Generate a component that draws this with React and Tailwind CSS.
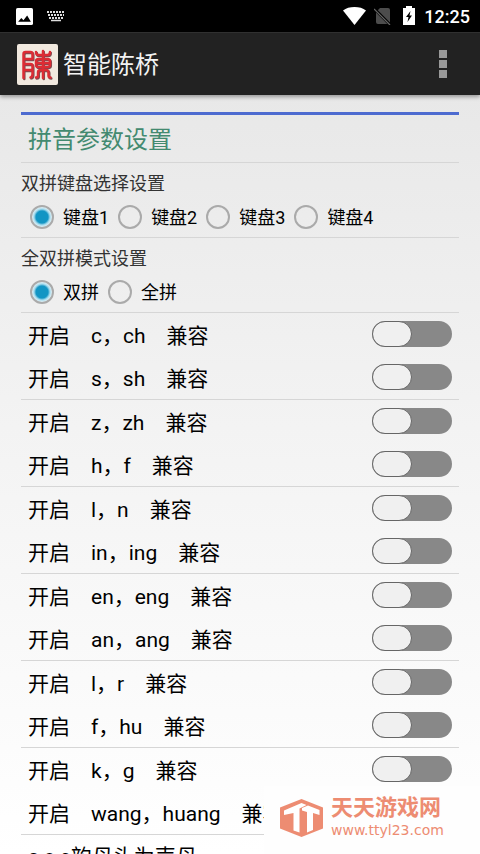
const rows = [
  ["c，ch", "s，sh"],
  ["z，zh", "h，f"],
  ["l，n", "in，ing"],
  ["en，eng", "an，ang"],
  ["l，r", "f，hu"],
  ["k，g", "wang，huang"],
];

function StatusBar() {
  return (
    <div className="flex h-8 shrink-0 items-center bg-black pr-2.5 pl-4 text-white">
      <svg className="size-[17px]" viewBox="0 0 16 16" aria-hidden="true">
        <rect width="16" height="16" rx="1.5" fill="#fff" />
        <path d="M2 13l3-3.500 2 2 3.500-4.500L14 13z" fill="#000" />
      </svg>
      <svg className="ml-3.5 h-[11px] w-[18px]" viewBox="0 0 18 11" aria-hidden="true">
        <path d="M0 1h18M1 4h16M2 7h14" stroke="#ddd" strokeWidth="2" strokeDasharray="2 1" />
        <path d="M4 9.500h10" stroke="#ddd" strokeWidth="1.500" />
      </svg>
      <div className="ml-auto flex items-center">
        <svg className="h-[18px] w-[23px]" viewBox="0 0 23 18" aria-hidden="true">
          <path d="M0 3.500C3 1 7 0 11.500 0S20 1 23 3.500L11.500 18z" fill="#fff" />
        </svg>
        <svg className="ml-2 h-[18px] w-[17px]" viewBox="0 0 17 18" aria-hidden="true">
          <path d="M6 1h8q2 0 2 2v12q0 2-2 2H4q-2 0-2-2V5z" fill="#4c4c4c" />
          <path d="M0 1.500L16 17.500" stroke="#000" strokeWidth="3" />
          <path d="M0 2L16 18" stroke="#666" strokeWidth="1.200" />
        </svg>
        <svg className="mb-0.5 ml-3 h-[19px] w-3" viewBox="0 0 12 19" aria-hidden="true">
          <path d="M3 0h6v2h3v17H0V2h3z" fill="#fff" />
          <path d="M7.500 5L3 11h2.500L4.500 16 9 9.500H6.500z" fill="#000" />
        </svg>
        <span className="ml-[9px] pt-0.5 text-lg font-medium">12:25</span>
      </div>
    </div>
  );
}

function SealStrokes() {
  return (
    <>
      <path d="M6.500 34V10q0-2 2-2h5q2 0 2 2v5h-8M6.500 20h7q2 0 2 2v4h-8M15.500 24v6q0 3-2 3.500" />
      <path d="M19 8q0 3 2.500 3h9q2.500 0 2.500-3M26 7v27M21.500 15h9q2.500 0 2.500 2.500v3q0 2.500-2.500 2.500h-9q-2.500 0-2.500-2.500v-3q0-2.500 2.500-2.500zM19 19h14" />
      <path d="M26 26h-2.500q-2.500 0-2.500 2.500v3q0 2-2 2M26 26h3q2.500 0 2.500 2.500v3q0 2 2 2" />
    </>
  );
}

function AppIcon() {
  return (
    <svg className="size-[41px]" viewBox="0 0 41 41" aria-hidden="true">
      <rect width="41" height="41" rx="2" fill="#f1e9df" />
      <g fill="none" strokeLinecap="round" strokeLinejoin="round" strokeWidth="2.500">
        <g stroke="#7d4a50" transform="translate(.8 .9)">
          <SealStrokes />
        </g>
        <g stroke="#dc2c34">
          <SealStrokes />
        </g>
      </g>
    </svg>
  );
}

function AppBar() {
  return (
    <header className="relative flex h-[63px] shrink-0 items-center border-t border-[#303030] bg-[#222] px-[17px] shadow-[0_2px_4px_rgba(0,0,0,0.35)]">
      <AppIcon />
      <h1 className="ml-[5px] pt-0.5 text-2xl text-[#f3f3f3]">智能陈桥</h1>
      <button type="button" aria-label="更多" className="ml-auto flex w-10 flex-col items-center gap-0.5 py-2">
        <span className="size-2 bg-[#999]" />
        <span className="size-2 bg-[#999]" />
        <span className="size-2 bg-[#999]" />
      </button>
    </header>
  );
}

function RadioSetting({ legend, name, options }) {
  return (
    <fieldset className="h-[75px] border-b border-[#d6d6d6] pt-[9px]">
      <legend className="float-left w-full text-lg leading-6 text-[#333]">{legend}</legend>
      <div className="clear-both flex gap-[9px] pt-2 pl-[9px]">
        {options.map((option, i) => (
          <label key={option} className="flex items-center gap-[9px] text-lg leading-6 text-black">
            <input
              type="radio"
              name={name}
              defaultChecked={i === 0}
              className="size-6 appearance-none rounded-full border-2 border-[#aaa] checked:bg-[radial-gradient(circle,#1295c4_0_6px,#a9dcee_8px,#e2f1f6_10px)]"
            />
            <span className="pt-0.5">{option}</span>
          </label>
        ))}
      </div>
    </fieldset>
  );
}

function SwitchRow({ keys }) {
  return (
    <label className="flex h-[43px] items-center justify-between px-[7px] text-[21px] whitespace-pre text-black">
      <span className="pt-1">{`开启　${keys}　兼容`}</span>
      <span className="mb-0.5 flex h-[26px] w-20 rounded-full bg-[#888]">
        <input
          type="checkbox"
          role="switch"
          className="h-full w-10 appearance-none rounded-full border border-[#666] bg-[#f0f0f0] checked:ml-auto"
        />
      </span>
    </label>
  );
}

function Watermark() {
  return (
    <div className="absolute right-0 bottom-0 flex h-[68px] w-[216px] items-center bg-[#fefefe] pb-1 pl-4 text-[#ed8c72]">
      <svg className="h-[38px] w-[43px] shrink-0" viewBox="0 0 43 38" aria-hidden="true">
        <path d="M21.500 0L43 8.500v21L21.500 38 0 29.500v-21z" fill="#ed8c72" />
        <path d="M4 11.500L21.500 4l5 2-7 3.500V33.500l-6-2V14L4 16z" fill="#fff" />
        <path d="M22 9l6-2.500L39.500 11v5L33 14v17l-6 2.500V13l-5-1.500z" fill="#fff" />
      </svg>
      <div className="ml-2">
        <p className="text-[22px] leading-6 font-bold">天天游戏网</p>
        <p className="font-['DejaVu_Sans',sans-serif] text-sm leading-5">www.ttyl23.com</p>
      </div>
    </div>
  );
}

export default function App() {
  return (
    <div className="relative flex h-screen flex-col overflow-hidden bg-linear-to-b from-[#e5e5e5] via-[#f3f3f3] via-50% to-white font-['Roboto','Noto_Sans_CJK_SC',sans-serif]">
      <StatusBar />
      <AppBar />
      <main className="px-[21px] pt-[17px]">
        <h2 className="h-[51px] border-t-3 border-b border-t-[#4d6bd0] border-b-[#d6d6d6] pt-[9px] pl-[7px] text-2xl text-[#438a70]">
          拼音参数设置
        </h2>
        <RadioSetting legend="双拼键盘选择设置" name="keyboard" options={["键盘1", "键盘2", "键盘3", "键盘4"]} />
        <RadioSetting legend="全双拼模式设置" name="mode" options={["双拼", "全拼"]} />
        {rows.map((pair) => (
          <div key={pair[0]} className="border-b border-[#d6d6d6]">
            {pair.map((keys) => (
              <SwitchRow key={keys} keys={keys} />
            ))}
          </div>
        ))}
        <p className="px-[7px] pt-[7px] text-[21px] text-black">a,o,e韵母头为声母</p>
      </main>
      <Watermark />
    </div>
  );
}
